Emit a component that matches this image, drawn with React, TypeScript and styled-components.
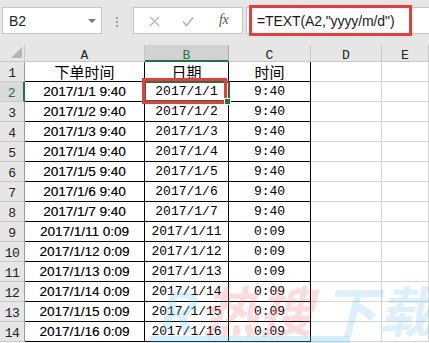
import React from "react";
import styled, { createGlobalStyle } from "styled-components";

const Global = createGlobalStyle`
  html, body { margin: 0; padding: 0; background: #fff; }
  body { font-family: "Liberation Sans", Arial, sans-serif; }
`;

const Frame = styled.div`
  position: relative;
  width: 429px;
  height: 343px;
  overflow: hidden;
  background: #fff;
`;

const Toolbar = styled.div`
  height: 45px;
  box-sizing: border-box;
  background: #e6e6e6;
  display: flex;
  align-items: flex-start;
  padding: 7px 0 0 2px;
`;

const Box = styled.div<{ $w?: number; $ml?: number }>`
  position: relative;
  box-sizing: border-box;
  height: 27px;
  ${(p) => (p.$w ? `width: ${p.$w}px;` : "flex: 1;")}
  margin-left: ${(p) => p.$ml ?? 0}px;
  background: #fff;
  border: 1px solid #c6c6c6;
  border-right-width: ${(p) => (p.$w ? 1 : 0)}px;
  display: flex;
  align-items: center;
`;

const NameText = styled.span`
  font-family: "Liberation Sans", Arial, sans-serif;
  font-size: 14px;
  color: #222;
  margin-left: 6px;
  flex: 1;
`;

const Caret = styled.span`
  width: 0;
  height: 0;
  border-left: 4px solid transparent;
  border-right: 4px solid transparent;
  border-top: 4px solid #777;
  margin-right: 5px;
`;

const Dots = styled.div`
  margin-left: 14px;
  margin-top: 10px;
  display: flex;
  flex-direction: column;
  gap: 2px;
  & > i {
    display: block;
    width: 2px;
    height: 2px;
    background: #a0a0a0;
  }
`;

const IconSlot = styled.span<{ $x: number }>`
  position: absolute;
  left: ${(p) => p.$x}px;
  top: 7px;
  width: 12px;
  height: 12px;
  display: flex;
  align-items: center;
  justify-content: center;
`;

const Fx = styled.span`
  position: absolute;
  left: 85px;
  top: 4px;
  font-family: "Liberation Serif", "Times New Roman", serif;
  font-style: italic;
  font-size: 14px;
  color: #555;
  letter-spacing: -0.5px;
`;

const FormulaText = styled.span`
  font-family: "Liberation Sans", Arial, sans-serif;
  font-size: 14px;
  color: #1a1a1a;
  margin-left: 10px;
  letter-spacing: -0.1px;
`;

const RedFrame = styled.div<{ $l: number; $t: number; $r: number; $b: number }>`
  position: absolute;
  left: ${(p) => p.$l}px;
  top: ${(p) => p.$t}px;
  right: ${(p) => p.$r}px;
  bottom: ${(p) => p.$b}px;
  border: 3px solid #ef3a3a;
  pointer-events: none;
  z-index: 3;
`;

const Sheet = styled.div`
  display: grid;
  grid-template-columns: 25px 120px 84px 82px 71px 1fr;
  grid-template-rows: 17px;
  grid-auto-rows: 20px;
`;

const Corner = styled.div`
  position: relative;
  background: #e6e6e6;
  border-right: 1px solid #c8c8c8;
  border-bottom: 1px solid #c8c8c8;
  box-sizing: border-box;
  &::after {
    content: "";
    position: absolute;
    right: 2px;
    bottom: 3px;
    width: 0;
    height: 0;
    border-left: 11px solid transparent;
    border-bottom: 11px solid #b6b6b6;
  }
`;

const ColHead = styled.div<{ $sel?: boolean }>`
  box-sizing: border-box;
  background: ${(p) => (p.$sel ? "#d2d2d2" : "#e6e6e6")};
  border-right: 1px solid ${(p) => (p.$sel ? "#ababab" : "#c8c8c8")};
  border-bottom: ${(p) => (p.$sel ? "2px solid #217346" : "1px solid #c8c8c8")};
  color: ${(p) => (p.$sel ? "#217346" : "#222")};
  font-family: "Liberation Mono", "Courier New", monospace;
  font-size: 13px;
  line-height: 15px;
  padding-top: 3px;
  text-align: center;
`;

const RowHead = styled.div<{ $sel?: boolean }>`
  box-sizing: border-box;
  background: ${(p) => (p.$sel ? "#dadada" : "#e6e6e6")};
  border-right: ${(p) => (p.$sel ? "2px solid #217346" : "1px solid #9a9a9a")};
  border-bottom: 1px solid #c8c8c8;
  color: ${(p) => (p.$sel ? "#217346" : "#222")};
  font-family: "Liberation Mono", "Courier New", monospace;
  font-size: 13px;
  line-height: 19px;
  padding-top: 2px;
  text-align: center;
  letter-spacing: -0.5px;
`;

type CellKind = "a" | "mono" | "cjk" | "empty";

const Cell = styled.div<{ $kind: CellKind; $boxed: boolean }>`
  position: relative;
  box-sizing: border-box;
  border-right: 1px solid ${(p) => (p.$boxed ? "#000" : "#d4d4d4")};
  border-bottom: 1px solid ${(p) => (p.$boxed ? "#000" : "#d4d4d4")};
  text-align: center;
  color: #000;
  white-space: nowrap;
  font-family: ${(p) =>
    p.$kind === "a"
      ? `"Liberation Sans", Arial, sans-serif`
      : p.$kind === "cjk"
      ? `"Noto Sans CJK SC", sans-serif`
      : `"Liberation Mono", "Courier New", monospace`};
  font-size: ${(p) => (p.$kind === "cjk" ? 15 : p.$kind === "a" ? 13.5 : 13)}px;
  line-height: ${(p) => (p.$kind === "cjk" ? 19 : 20)}px;
  ${(p) => (p.$kind === "a" ? "text-shadow: 0.2px 0 0 rgba(0, 0, 0, 0.45);" : "")}
`;

const Selection = styled.div`
  position: absolute;
  left: -1px;
  top: -1px;
  right: -2px;
  bottom: -1px;
  border: 2px solid #217346;
  z-index: 2;
  pointer-events: none;
`;

const Handle = styled.div`
  position: absolute;
  right: -3px;
  bottom: -4px;
  width: 5px;
  height: 5px;
  background: #217346;
  border: 1px solid #fff;
  z-index: 4;
`;

const Watermark = styled.div`
  position: absolute;
  left: 156px;
  top: 274px;
  display: flex;
  align-items: flex-end;
  gap: 8px;
  white-space: nowrap;
  font-family: "Noto Sans CJK SC", sans-serif;
  font-weight: 700;
  font-style: italic;
  font-size: 54px;
  line-height: 70px;
  pointer-events: none;
  z-index: 5;
`;

const Mark = styled.span<{ $c: string }>`
  flex: none;
  color: ${(p) => p.$c};
  letter-spacing: 2px;
`;

const Stripe = styled.div`
  position: absolute;
  left: 150px;
  width: 200px;
  bottom: 0;
  height: 7px;
  background: rgba(110, 195, 235, 0.3);
  z-index: 5;
`;

const rowsA = [
  "2017/1/1 9:40",
  "2017/1/2 9:40",
  "2017/1/3 9:40",
  "2017/1/4 9:40",
  "2017/1/5 9:40",
  "2017/1/6 9:40",
  "2017/1/7 9:40",
  "2017/1/11 0:09",
  "2017/1/12 0:09",
  "2017/1/13 0:09",
  "2017/1/14 0:09",
  "2017/1/15 0:09",
  "2017/1/16 0:09",
];

const cols = ["A", "B", "C", "D", "E"];

export default function App() {
  const data: { a: string; b: string; c: string }[] = [
    { a: "下单时间", b: "日期", c: "时间" },
    ...rowsA.map((s) => {
      const [d, t] = s.split(" ");
      return { a: s, b: d, c: t };
    }),
  ];

  return (
    <Frame>
      <Global />
      <Toolbar>
        <Box $w={100}>
          <NameText>B2</NameText>
          <Caret />
        </Box>
        <Dots>
          <i />
          <i />
          <i />
        </Dots>
        <Box $w={110} $ml={15}>
          <IconSlot $x={14}>
            <svg width="11" height="11" viewBox="0 0 11 11">
              <path d="M1 1 L10 10 M10 1 L1 10" stroke="#b8b8b8" strokeWidth="1.3" />
            </svg>
          </IconSlot>
          <IconSlot $x={48}>
            <svg width="12" height="11" viewBox="0 0 12 11">
              <path d="M1 5.5 L4.5 9.5 L11 1.5" stroke="#b8b8b8" strokeWidth="1.8" fill="none" />
            </svg>
          </IconSlot>
          <Fx>fx</Fx>
        </Box>
        <Box $ml={3}>
          <FormulaText>=TEXT(A2,"yyyy/m/d")</FormulaText>
          <RedFrame $l={2} $t={-3} $r={17} $b={-3} />
        </Box>
      </Toolbar>
      <Sheet>
        <Corner />
        {cols.map((c) => (
          <ColHead key={c} $sel={c === "B"}>
            {c}
          </ColHead>
        ))}
        {data.map((r, i) => (
          <React.Fragment key={i}>
            <RowHead $sel={i === 1}>{i + 1}</RowHead>
            <Cell $kind={i === 0 ? "cjk" : "a"} $boxed>
              {r.a}
            </Cell>
            <Cell $kind={i === 0 ? "cjk" : "mono"} $boxed>
              {r.b}
              {i === 1 && (
                <>
                  <Selection />
                  <RedFrame $l={-3} $t={-4} $r={1} $b={-3} />
                  <Handle />
                </>
              )}
            </Cell>
            <Cell $kind={i === 0 ? "cjk" : "mono"} $boxed>
              {r.c}
            </Cell>
            <Cell $kind="empty" $boxed={false} />
            <Cell $kind="empty" $boxed={false} />
          </React.Fragment>
        ))}
      </Sheet>
      <Watermark>
        <Mark $c="rgba(120, 200, 235, 0.28)">R</Mark>
        <Mark $c="rgba(240, 110, 120, 0.25)">热搜</Mark>
        <Mark $c="rgba(110, 195, 235, 0.25)">下载</Mark>
      </Watermark>
      <Stripe />
    </Frame>
  );
}
